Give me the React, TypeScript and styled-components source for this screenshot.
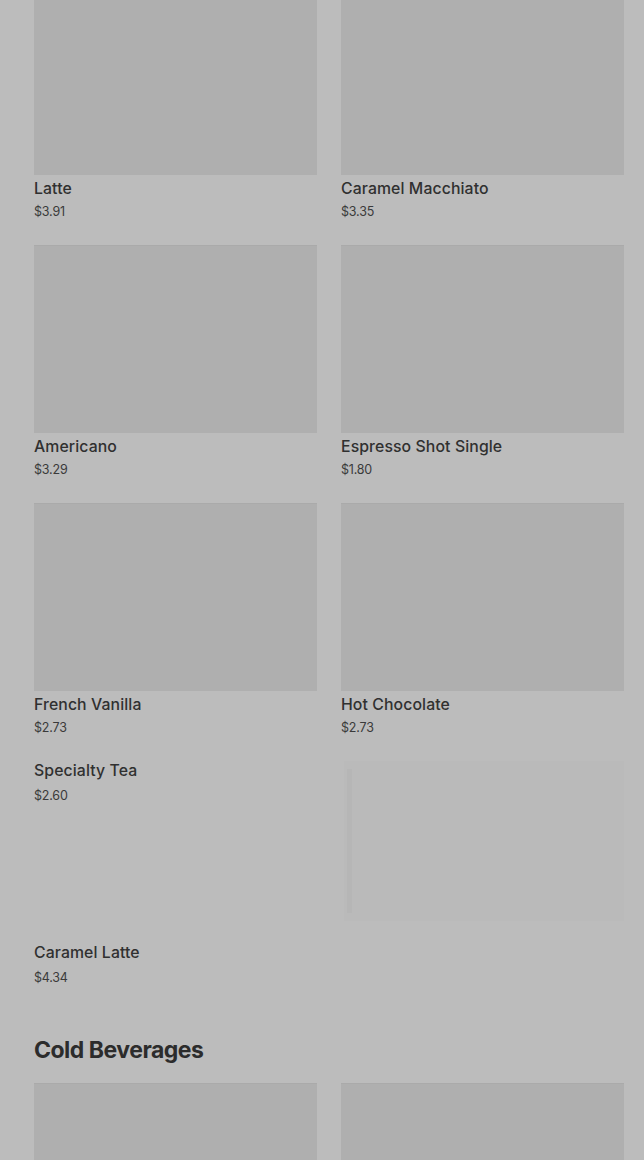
import React from "react";
import styled, { createGlobalStyle } from "styled-components";

const Global = createGlobalStyle`
  html, body { margin: 0; padding: 0; background: #bcbcbc; overflow: hidden; }
  body { font-family: Inter, "Noto Sans", Arial, sans-serif; }
`;

const Page = styled.div`
  width: 644px;
  height: 1160px;
  overflow: hidden;
  background: #bcbcbc;
`;

const Content = styled.div`
  margin-top: -13px;
  padding: 0 20px 0 34px;
`;

const Grid = styled.div`
  display: grid;
  grid-template-columns: 283px 283px;
  column-gap: 24px;
  row-gap: 24px;
`;

const Card = styled.div`
  display: flex;
  flex-direction: column;
`;

const Thumb = styled.div`
  height: 188px;
  background: #afafaf;
  box-shadow: inset 0 1px 0 #aaaaaa;
`;

const Name = styled.div<{ $tight?: boolean }>`
  margin-top: ${(p) => (p.$tight ? "0" : "3px")};
  font-size: 15.8px;
  font-weight: 500;
  line-height: ${(p) => (p.$tight ? "20px" : "22px")};
  color: #303030;
  letter-spacing: 0.1px;
`;

const Price = styled.div<{ $tight?: boolean }>`
  margin-top: ${(p) => (p.$tight ? "6px" : "2px")};
  font-size: 12.5px;
  line-height: ${(p) => (p.$tight ? "18px" : "19px")};
  color: #3a3a3a;
  letter-spacing: -0.2px;
`;

const WideCard = styled.div<{ $pull?: boolean }>`
  grid-column: 1 / -1;
  display: flex;
  justify-content: space-between;
  align-items: flex-start;
  margin-top: ${(p) => (p.$pull ? "-2px" : "0")};
`;

const WideText = styled.div`
  display: flex;
  flex-direction: column;
`;

const LoadingBox = styled.div`
  width: 280px;
  height: 160px;
  background: #bababa;
  display: flex;
  align-items: center;
  padding-left: 3px;
  box-sizing: border-box;
`;

const LoadingStrip = styled.div`
  width: 5px;
  height: 144px;
  background: #b6b6b6;
`;

const Heading = styled.h2`
  margin: 47px 0 17px;
  font-size: 23px;
  font-weight: 700;
  line-height: 32px;
  letter-spacing: -0.5px;
  color: #2c2c2c;
`;

const items = [
  { name: "Latte", price: "$3.91" },
  { name: "Caramel Macchiato", price: "$3.35" },
  { name: "Americano", price: "$3.29" },
  { name: "Espresso Shot Single", price: "$1.80" },
  { name: "French Vanilla", price: "$2.73" },
  { name: "Hot Chocolate", price: "$2.73" },
];

export default function App() {
  return (
    <Page>
      <Global />
      <Content>
        <Grid>
          {items.map((it) => (
            <Card key={it.name}>
              <Thumb />
              <Name>{it.name}</Name>
              <Price>{it.price}</Price>
            </Card>
          ))}
          <WideCard>
            <WideText>
              <Name $tight>Specialty Tea</Name>
              <Price $tight>$2.60</Price>
            </WideText>
            <LoadingBox>
              <LoadingStrip />
            </LoadingBox>
          </WideCard>
          <WideCard $pull>
            <WideText>
              <Name $tight>Caramel Latte</Name>
              <Price $tight>$4.34</Price>
            </WideText>
          </WideCard>
        </Grid>
        <Heading>Cold Beverages</Heading>
        <Grid>
          <Card>
            <Thumb />
          </Card>
          <Card>
            <Thumb />
          </Card>
        </Grid>
      </Content>
    </Page>
  );
}
